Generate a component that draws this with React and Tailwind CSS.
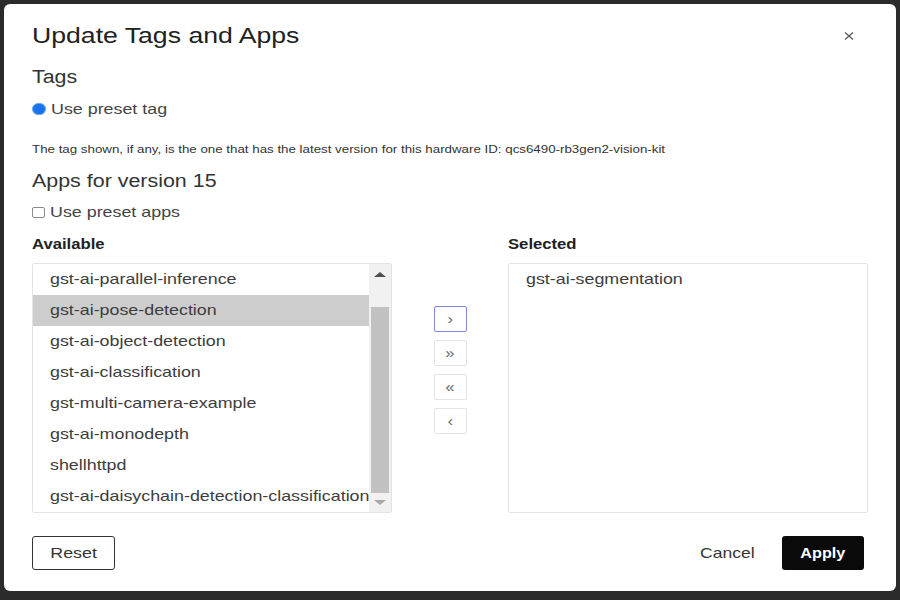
import { useState } from "react";

const available = [
  "gst-ai-parallel-inference",
  "gst-ai-pose-detection",
  "gst-ai-object-detection",
  "gst-ai-classification",
  "gst-multi-camera-example",
  "gst-ai-monodepth",
  "shellhttpd",
  "gst-ai-daisychain-detection-classification",
];

const moves = ["›", "»", "«", "‹"];

// the captured dialog is rendered a bit wide, so text is stretched to match
function Wide({ children, className = "" }) {
  return <span className={"inline-block origin-left scale-x-[1.19] whitespace-nowrap " + className}>{children}</span>;
}

export default function App() {
  const [picked, setPicked] = useState(1);

  return (
    <div className="w-[900px] h-[600px] bg-[#2b2b2b] pt-1 pl-1 font-['Liberation_Sans',Arial,sans-serif] text-[#222]">
      <div className="w-[892px] h-[587px] bg-white rounded-md px-7 pt-4 flex flex-col">
        {/* header */}
        <div className="h-[30px] pt-px flex items-center justify-between">
          <h1 className="text-[22px] leading-none text-[#212121]">
            <Wide className="scale-x-[1.21]">Update Tags and Apps</Wide>
          </h1>
          <button className="w-4 h-4 mr-[11px] flex items-center justify-center text-[#555]">
            <svg width="10" height="8" viewBox="0 0 10 8" stroke="currentColor" strokeWidth="1.2">
              <path d="M1 0.5L9 7.5M9 0.5L1 7.5" />
            </svg>
          </button>
        </div>

        <div className="mt-[17px] h-5 flex items-center text-[18px] text-[#333]">
          <Wide>Tags</Wide>
        </div>

        <label className="mt-3 h-5 flex items-center gap-[5px] text-[15px] text-[#444]">
          <span className="w-[14px] h-[12px] rounded-full bg-[#1a73e8] border border-[#6aa5f3] flex items-center justify-center">
            <span className="w-[6px] h-[5px] rounded-full bg-[#1a73e8]" />
          </span>
          <Wide>Use preset tag</Wide>
        </label>

        <p className="mt-[22px] h-4 flex items-center text-[11px] text-[#333]">
          <Wide className="scale-x-[1.21]">
            The tag shown, if any, is the one that has the latest version for this hardware ID: qcs6490-rb3gen2-vision-kit
          </Wide>
        </p>

        <div className="mt-[14px] h-5 flex items-center text-[18px] text-[#333]">
          <Wide>Apps for version 15</Wide>
        </div>

        <label className="mt-[11px] h-5 flex items-center gap-[5px] text-[15px] text-[#444]">
          <span className="w-[13px] h-[11px] rounded-[2px] border border-[#8a8a8a] bg-white" />
          <Wide>Use preset apps</Wide>
        </label>

        {/* dual list */}
        <div className="mt-3 flex">
          <div className="w-[360px] flex flex-col">
            <div className="h-5 flex items-center text-sm font-bold text-[#222]">
              <Wide>Available</Wide>
            </div>
            <div className="mt-[9px] h-[250px] border border-[#e3e3e3] rounded-[2px] flex">
              <ul className="flex-1 flex flex-col overflow-hidden">
                {available.map((name, i) => (
                  <li
                    key={name}
                    onClick={() => setPicked(i)}
                    className={
                      "h-[31px] pl-[17px] flex items-center text-[15px] text-[#3d3d3d] " +
                      (i === picked ? "bg-[#cdcdcd]" : "")
                    }
                  >
                    <Wide className="scale-x-[1.18]">{name}</Wide>
                  </li>
                ))}
              </ul>
              <div className="w-[22px] bg-[#f1f1f1] flex flex-col items-center">
                <div className="h-[20px] flex items-center justify-center">
                  <div className="w-0 h-0 border-l-[6px] border-r-[6px] border-b-[5px] border-l-transparent border-r-transparent border-b-[#505050]" />
                </div>
                <div className="mt-[23px] w-[18px] h-[186px] bg-[#c1c1c1]" />
                <div className="flex-1 flex items-center justify-center">
                  <div className="w-0 h-0 border-l-[6px] border-r-[6px] border-t-[5px] border-l-transparent border-r-transparent border-t-[#a8a8a8]" />
                </div>
              </div>
            </div>
          </div>

          <div className="w-[116px] pt-[72px] flex flex-col items-center gap-2">
            {moves.map((m, i) => (
              <button
                key={m}
                className={
                  "w-[33px] h-[26px] rounded-[2px] flex items-center justify-center text-[14px] leading-none text-[#666] bg-white " +
                  (i === 0 ? "border-[1.5px] border-[#7b8ae0]" : "border border-[#e3e3e3]")
                }
              >
                <span className="inline-block scale-x-[1.19]">{m}</span>
              </button>
            ))}
          </div>

          <div className="w-[360px] flex flex-col">
            <div className="h-5 flex items-center text-sm font-bold text-[#222]">
              <Wide>Selected</Wide>
            </div>
            <div className="mt-[9px] h-[250px] border border-[#e3e3e3] rounded-[2px]">
              <div className="h-[31px] pl-[17px] flex items-center text-[15px] text-[#3d3d3d]">
                <Wide>gst-ai-segmentation</Wide>
              </div>
            </div>
          </div>
        </div>

        {/* footer */}
        <div className="mt-[23px] flex items-center">
          <button className="w-[83px] h-[34px] border border-[#333] rounded-[3px] text-[15px] text-[#333] bg-white">
            <span className="inline-block scale-x-[1.19]">Reset</span>
          </button>
          <div className="ml-auto mr-1 flex items-center">
            <button className="h-[34px] pl-[14px] pr-[17px] text-[15px] text-[#333]">
              <span className="inline-block scale-x-[1.17]">Cancel</span>
            </button>
            <button className="ml-[14px] w-[82px] h-[34px] rounded-[3px] bg-[#0a0a0a] text-white text-[15px] font-bold">
              <span className="inline-block scale-x-[1.08]">Apply</span>
            </button>
          </div>
        </div>
      </div>
    </div>
  );
}
